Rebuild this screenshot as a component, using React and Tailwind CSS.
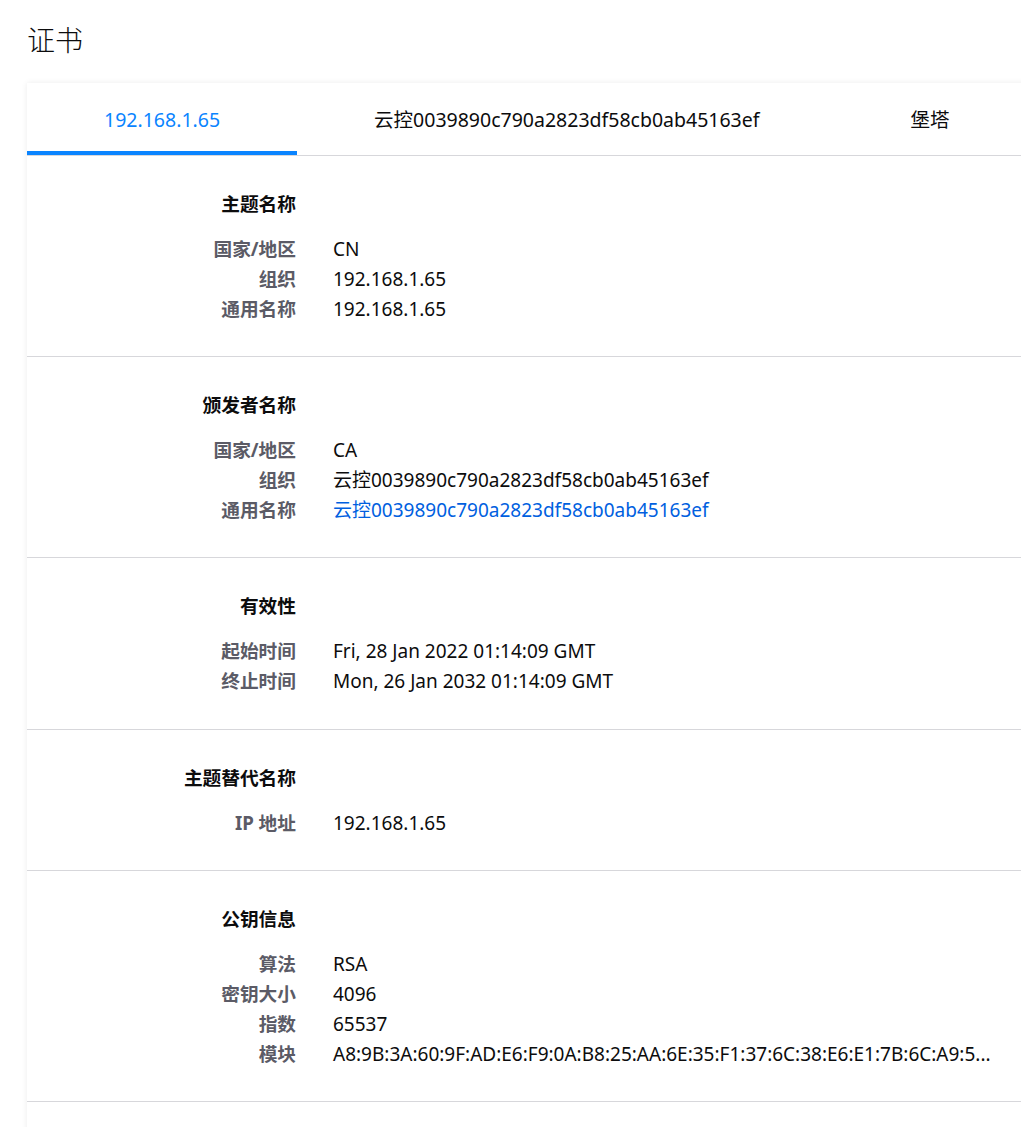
import React from "react";

const sections = [
  {
    title: "主题名称",
    rows: [
      ["国家/地区", "CN"],
      ["组织", "192.168.1.65"],
      ["通用名称", "192.168.1.65"],
    ],
  },
  {
    title: "颁发者名称",
    rows: [
      ["国家/地区", "CA"],
      ["组织", "云控0039890c790a2823df58cb0ab45163ef"],
      ["通用名称", "云控0039890c790a2823df58cb0ab45163ef", true],
    ],
  },
  {
    title: "有效性",
    extra: true,
    rows: [
      ["起始时间", "Fri, 28 Jan 2022 01:14:09 GMT"],
      ["终止时间", "Mon, 26 Jan 2032 01:14:09 GMT"],
    ],
  },
  {
    title: "主题替代名称",
    rows: [["IP 地址", "192.168.1.65"]],
  },
  {
    title: "公钥信息",
    rows: [
      ["算法", "RSA"],
      ["密钥大小", "4096"],
      ["指数", "65537"],
      ["模块", "A8:9B:3A:60:9F:AD:E6:F9:0A:B8:25:AA:6E:35:F1:37:6C:38:E6:E1:7B:6C:A9:5..."],
    ],
  },
];

function Section({ title, rows, extra }) {
  return (
    <div className={"border-b border-[#d7d7db] pt-[36px] " + (extra ? "pb-[33px]" : "pb-[32px]")}>
      <div className="grid grid-cols-[269px_1fr] gap-x-[37px]">
        <div className="text-right text-[18.7px] leading-[24px] font-bold text-[#0c0c0d]">{title}</div>
        <div />
      </div>
      <div className="mt-[18px] grid grid-cols-[269px_1fr] gap-x-[37px]">
        {rows.map(([k, v, link], i) => (
          <React.Fragment key={i}>
            <div className="text-right text-[18.7px] leading-[30px] font-bold text-[#5b5b66]">{k}</div>
            <div
              className={
                "text-[19px] leading-[30px] whitespace-nowrap " +
                (link ? "text-[#0060df]" : "text-[#0c0c0d]")
              }
            >
              {v}
            </div>
          </React.Fragment>
        ))}
      </div>
    </div>
  );
}

export default function App() {
  return (
    <div
      className="w-[1021px] h-[1127px] overflow-hidden bg-white"
      style={{ fontFamily: '"Noto Sans", "Noto Sans CJK SC", sans-serif' }}
    >
      <h1 className="pl-[27px] pt-[21px] text-[28px] leading-[38px] font-light text-[#0c0c0d]">证书</h1>
      <div className="ml-[27px] mt-[24px] w-[1100px] bg-white shadow-[0_0_6px_rgba(0,0,0,0.08)]">
        <div className="flex border-b border-[#d7d7db]">
          <div className="relative px-[77px] h-[72px] pt-[2px] flex items-center text-[19.5px] text-[#0a84ff]">
            192.168.1.65
            <div className="absolute left-0 right-0 bottom-0 h-[4px] bg-[#0a84ff]" />
          </div>
          <div className="px-[77px] h-[72px] pt-[2px] flex items-center text-[19.5px] text-[#0c0c0d]">
            云控0039890c790a2823df58cb0ab45163ef
          </div>
          <div className="px-[74px] h-[72px] pt-[2px] flex items-center text-[19.5px] text-[#0c0c0d]">堡塔</div>
        </div>
        {sections.map((s, i) => (
          <Section key={i} {...s} />
        ))}
        <div className="h-[60px]" />
      </div>
    </div>
  );
}
